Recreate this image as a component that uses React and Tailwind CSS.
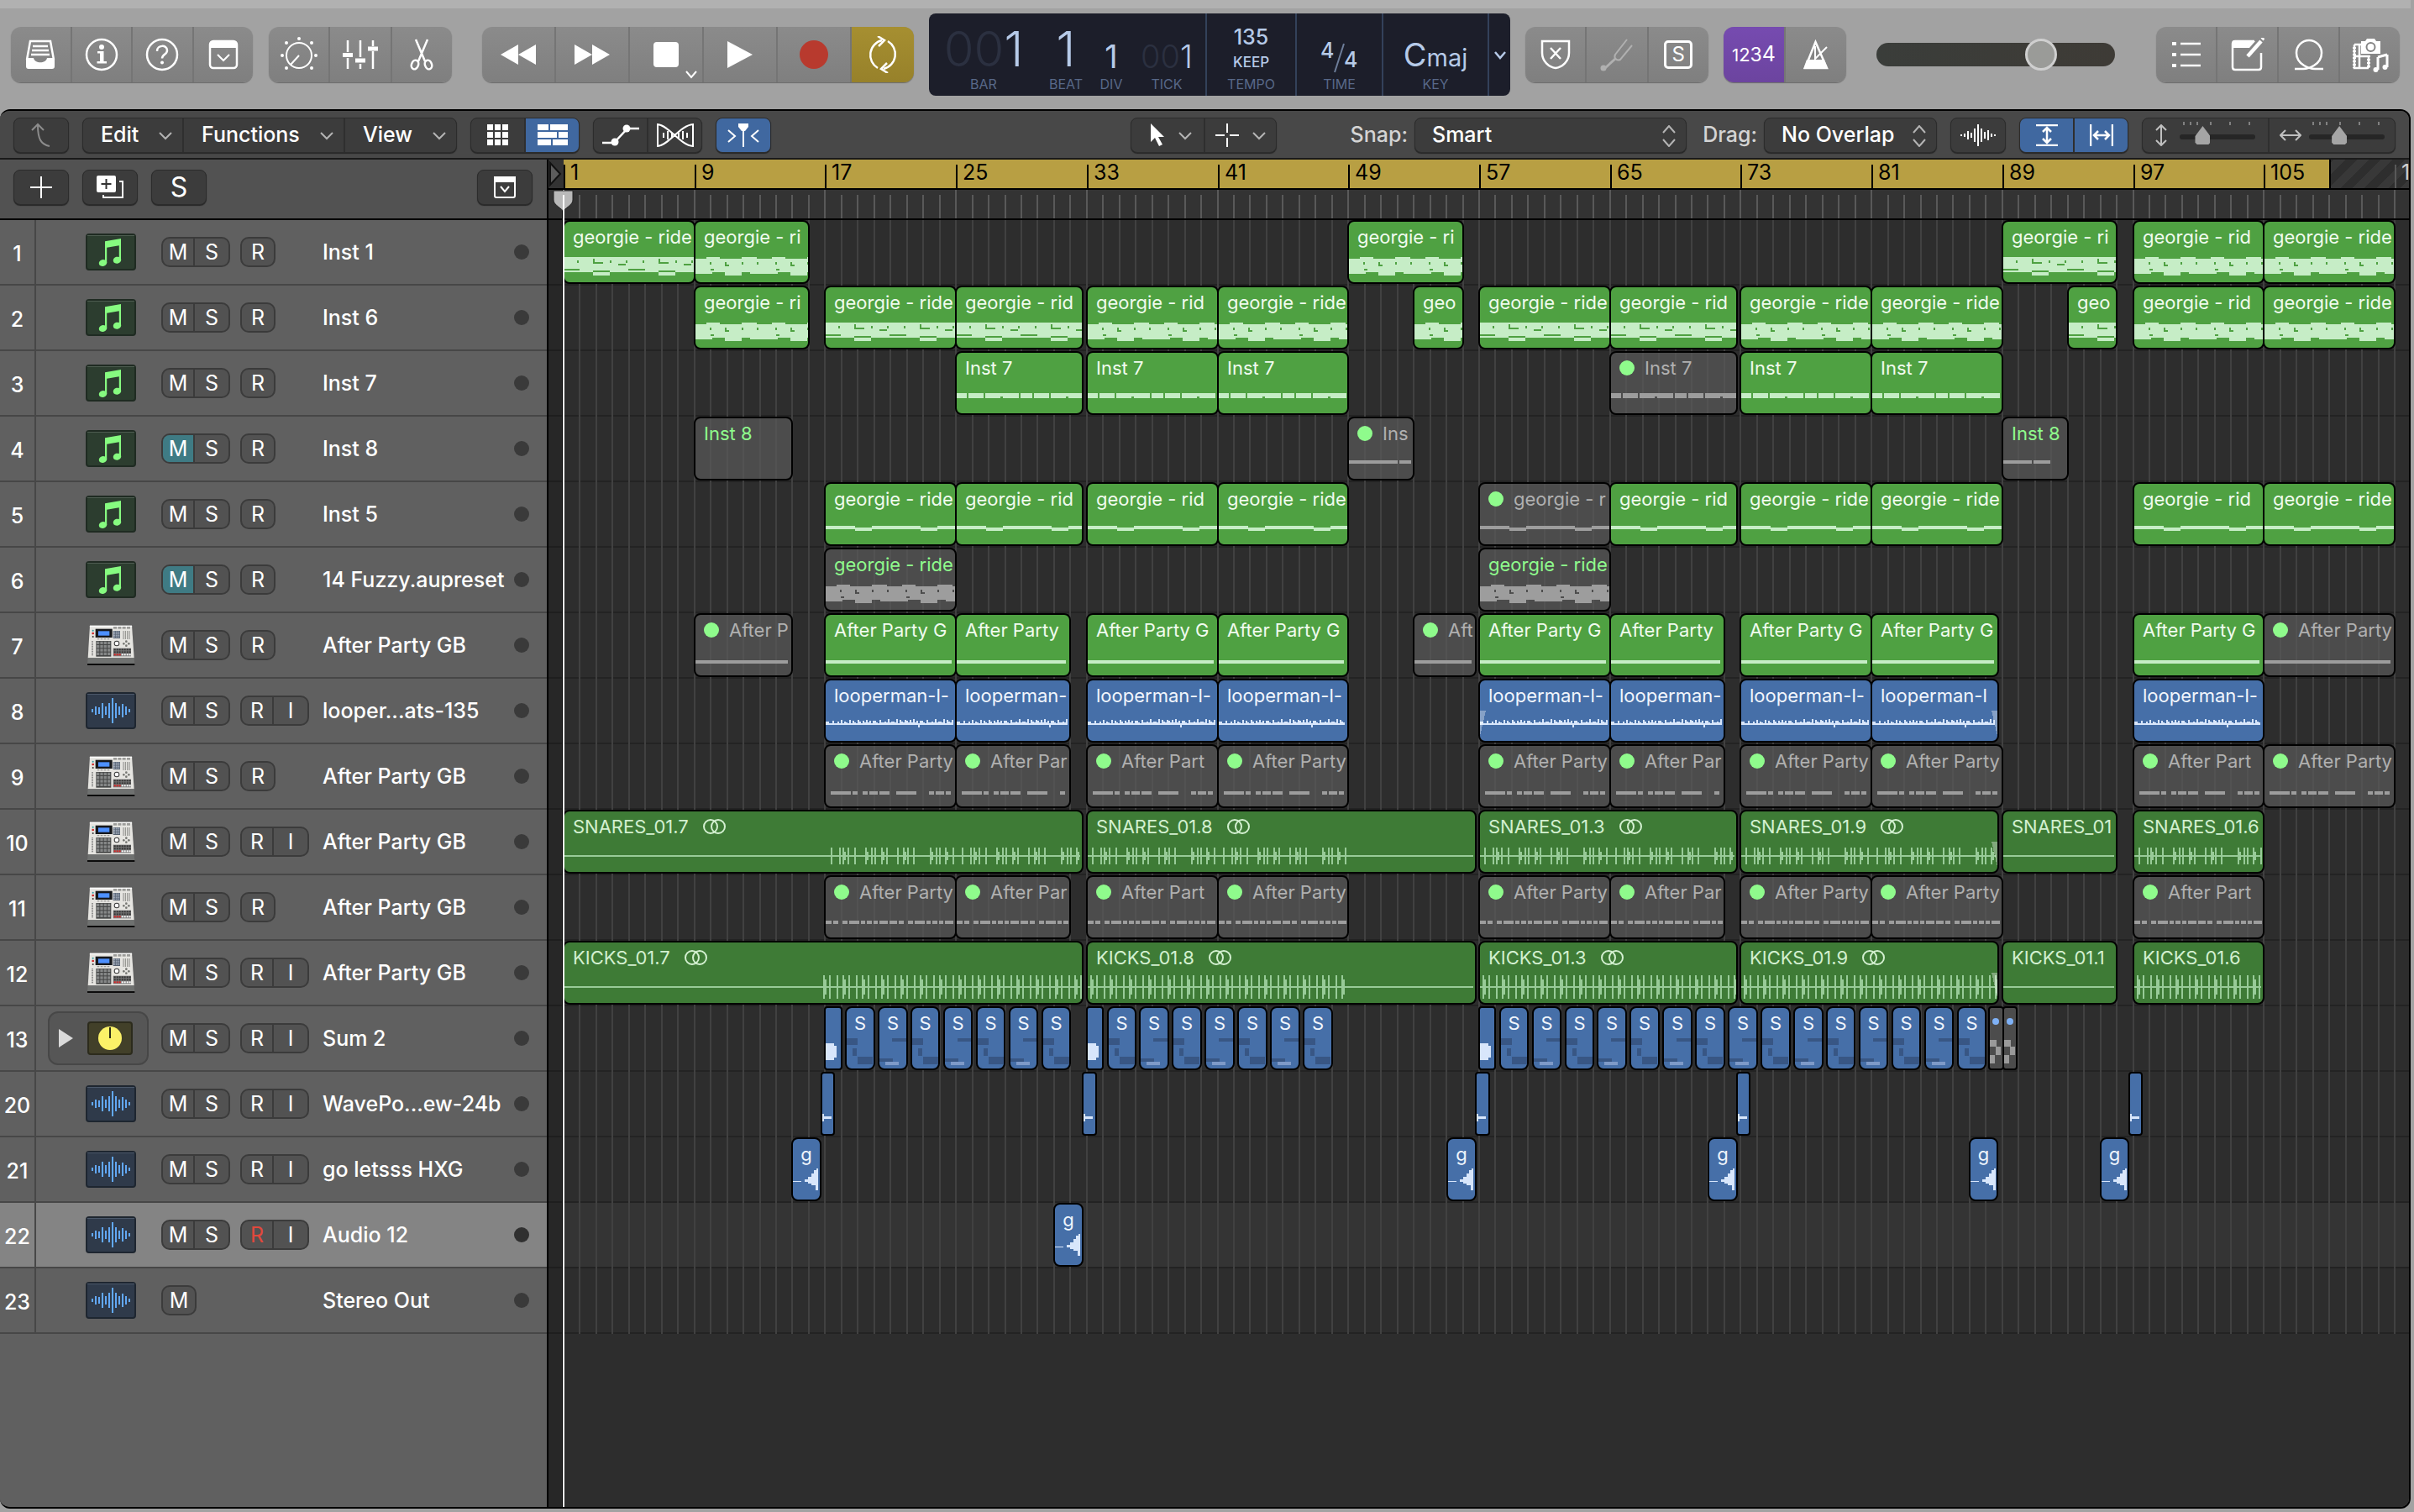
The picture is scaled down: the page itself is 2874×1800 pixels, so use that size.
import React from 'react';

// Horizontal zoom of the arrange area
const PX_PER_BAR = 19.464;
const barX = (bar) => Math.round((bar - 1) * PX_PER_BAR);

const RULER_BARS = [1, 9, 17, 25, 33, 41, 49, 57, 65, 73, 81, 89, 97, 105];
const GRID_BARS = Array.from({ length: 113 }, (_, i) => i + 1);

// Region: [start bar, end bar, label, options]
const MUTED = { muted: true };
const DOT = { dot: true };
const STEREO = { stereo: true };

const summingRegions = () => {
  const list = [];
  const groups = [
    [17, 7],
    [33, 7],
    [57, 15],
  ];
  groups.forEach(([start, count]) => {
    list.push([start, start + 1, '', { art: 'hit', thin: true }]);
    for (let i = 0; i < count; i++) {
      const from = start + 1.27 + i * 2;
      list.push([from, from + 1.72, 'S', { art: i % 2 ? 'sumB' : 'sumA' }]);
    }
  });
  list.push([88.2, 89.05, '', { art: 'stub', thin: true, gray: true }]);
  list.push([89.05, 89.9, '', { art: 'stub', thin: true, gray: true }]);
  return list;
};

const TRACKS = [
  {
    num: 1, icon: 'note', name: 'Inst 1', buttons: 'MSR', color: 'green',
    regions: [
      [1, 9, 'georgie - ride', { art: 'riffA' }],
      [9, 16, 'georgie - ri', { art: 'riffB' }],
      [49, 56, 'georgie - ri', { art: 'riffB' }],
      [89, 96, 'georgie - ri', { art: 'riffA' }],
      [97, 105, 'georgie - rid', { art: 'riffB' }],
      [105, 113, 'georgie - ride', { art: 'riffB' }],
    ],
  },
  {
    num: 2, icon: 'note', name: 'Inst 6', buttons: 'MSR', color: 'green',
    regions: [
      [9, 16, 'georgie - ri', { art: 'riffB' }],
      [17, 25, 'georgie - ride', { art: 'riffA' }],
      [25, 32.75, 'georgie - rid', { art: 'riffA' }],
      [33, 41, 'georgie - rid', { art: 'riffB' }],
      [41, 49, 'georgie - ride', { art: 'riffB' }],
      [53, 56, 'geo', { art: 'riffB' }],
      [57, 65, 'georgie - ride', { art: 'riffA' }],
      [65, 72.75, 'georgie - rid', { art: 'riffA' }],
      [73, 81, 'georgie - ride', { art: 'riffB' }],
      [81, 89, 'georgie - ride', { art: 'riffB' }],
      [93, 96, 'geo', { art: 'riffA' }],
      [97, 105, 'georgie - rid', { art: 'riffB' }],
      [105, 113, 'georgie - ride', { art: 'riffB' }],
    ],
  },
  {
    num: 3, icon: 'note', name: 'Inst 7', buttons: 'MSR', color: 'green', art: 'chops',
    regions: [
      [25, 32.75, 'Inst 7'],
      [33, 41, 'Inst 7'],
      [41, 49, 'Inst 7'],
      [65, 72.75, 'Inst 7', DOT],
      [73, 81, 'Inst 7'],
      [81, 89, 'Inst 7'],
    ],
  },
  {
    num: 4, icon: 'note', name: 'Inst 8', buttons: 'MSR', color: 'green', muted: true, art: 'short',
    regions: [
      [9, 15, 'Inst 8', { muted: true, art: 'none' }],
      [49, 53, 'Ins', { dot: true, art: 'long' }],
      [89, 93, 'Inst 8', MUTED],
    ],
  },
  {
    num: 5, icon: 'note', name: 'Inst 5', buttons: 'MSR', color: 'green', art: 'bass',
    regions: [
      [17, 25, 'georgie - ride'],
      [25, 32.75, 'georgie - rid'],
      [33, 41, 'georgie - rid'],
      [41, 49, 'georgie - ride'],
      [57, 65, 'georgie - r', DOT],
      [65, 72.75, 'georgie - rid'],
      [73, 81, 'georgie - ride'],
      [81, 89, 'georgie - ride'],
      [97, 105, 'georgie - rid'],
      [105, 113, 'georgie - ride'],
    ],
  },
  {
    num: 6, icon: 'note', name: '14 Fuzzy.aupreset', buttons: 'MSR', color: 'green', muted: true, art: 'riffB',
    regions: [
      [17, 25, 'georgie - ride', MUTED],
      [57, 65, 'georgie - ride', MUTED],
    ],
  },
  {
    num: 7, icon: 'mpc', name: 'After Party GB', buttons: 'MSR', color: 'green', art: 'line',
    regions: [
      [9, 15, 'After P', DOT],
      [17, 25, 'After Party G'],
      [25, 32, 'After Party'],
      [33, 41, 'After Party G'],
      [41, 49, 'After Party G'],
      [53, 56.8, 'Aft', DOT],
      [57, 65, 'After Party G'],
      [65, 72, 'After Party'],
      [73, 81, 'After Party G'],
      [81, 88.75, 'After Party G'],
      [97, 105, 'After Party G'],
      [105, 113, 'After Party', DOT],
    ],
  },
  {
    num: 8, icon: 'wave', name: 'looper...ats-135', buttons: 'MSRI', color: 'blue', art: 'hats',
    regions: [
      [17, 25, 'looperman-l-'],
      [25, 32, 'looperman-'],
      [33, 41, 'looperman-l-'],
      [41, 49, 'looperman-l-'],
      [57, 65, 'looperman-l-', { fadeIn: true }],
      [65, 72, 'looperman-'],
      [73, 81, 'looperman-l-'],
      [81, 88.75, 'looperman-l', { fadeOut: true }],
      [97, 105, 'looperman-l-'],
    ],
  },
  {
    num: 9, icon: 'mpc', name: 'After Party GB', buttons: 'MSR', color: 'green', art: 'dashes',
    regions: [
      [17, 25, 'After Party', DOT],
      [25, 32, 'After Par', DOT],
      [33, 41, 'After Part', DOT],
      [41, 49, 'After Party', DOT],
      [57, 65, 'After Party', DOT],
      [65, 72, 'After Par', DOT],
      [73, 81, 'After Party', DOT],
      [81, 89, 'After Party', DOT],
      [97, 105, 'After Part', DOT],
      [105, 113, 'After Party', DOT],
    ],
  },
  {
    num: 10, icon: 'mpc', name: 'After Party GB', buttons: 'MSRI', color: 'dark', art: 'snares',
    regions: [
      [1, 32.75, 'SNARES_01.7', { stereo: true, from: 17 }],
      [33, 56.8, 'SNARES_01.8', { stereo: true, to: 49 }],
      [57, 72.75, 'SNARES_01.3', STEREO],
      [73, 88.75, 'SNARES_01.9', { stereo: true, fadeOut: true }],
      [89, 96, 'SNARES_01', { to: 89 }],
      [97, 105, 'SNARES_01.6'],
    ],
  },
  {
    num: 11, icon: 'mpc', name: 'After Party GB', buttons: 'MSR', color: 'green', art: 'dots',
    regions: [
      [17, 25, 'After Party', DOT],
      [25, 32, 'After Par', DOT],
      [33, 41, 'After Part', DOT],
      [41, 49, 'After Party', DOT],
      [57, 65, 'After Party', DOT],
      [65, 72, 'After Par', DOT],
      [73, 81, 'After Party', DOT],
      [81, 89, 'After Party', DOT],
      [97, 105, 'After Part', DOT],
    ],
  },
  {
    num: 12, icon: 'mpc', name: 'After Party GB', buttons: 'MSRI', color: 'dark', art: 'kicks',
    regions: [
      [1, 32.75, 'KICKS_01.7', { stereo: true, from: 16.6 }],
      [33, 56.8, 'KICKS_01.8', { stereo: true, to: 48.8 }],
      [57, 72.75, 'KICKS_01.3', STEREO],
      [73, 88.75, 'KICKS_01.9', { stereo: true, fadeOut: true }],
      [89, 96, 'KICKS_01.1', { to: 89 }],
      [97, 105, 'KICKS_01.6'],
    ],
  },
  { num: 13, icon: 'stack', name: 'Sum 2', buttons: 'MSRI', color: 'blue', regions: summingRegions() },
  {
    num: 20, icon: 'wave', name: 'WavePo...ew-24b', buttons: 'MSRI', color: 'blue', art: 'blip',
    regions: [16.75, 32.75, 56.8, 72.75, 96.75].map((b) => [b, b + 0.8, '', { thin: true }]),
  },
  {
    num: 21, icon: 'wave', name: 'go letsss HXG', buttons: 'MSRI', color: 'blue', art: 'swell',
    regions: [15, 55.05, 71.05, 87, 95].map((b) => [b, b + 1.72, 'g']),
  },
  {
    num: 22, icon: 'wave', name: 'Audio 12', buttons: 'MSRI', color: 'blue', art: 'swell', selected: true, armed: true,
    regions: [[31, 32.75, 'g']],
  },
  { num: 23, icon: 'wave', name: 'Stereo Out', buttons: 'M', color: 'blue', regions: [] },
];

/* ---------- Region artwork ---------- */

const R = (x, y, w, h, cut) => ({ x, y, w, h, cut });

// Each pattern repeats every `size` pixels
const PATTERNS = {
  riffA: {
    size: 78,
    rects: [
      R(0, 44, 78, 18), R(36, 62, 20, 4), R(0, 58, 20, 2, true), R(36, 60, 20, 2, true),
      R(17, 48, 2, 3, true), R(36, 46, 2, 6, true), R(38, 50, 10, 2, true),
      R(56, 48, 2, 3, true), R(66, 52, 9, 2, true), R(75, 48, 2, 3, true),
    ],
  },
  riffB: {
    size: 78,
    rects: [
      R(0, 46, 78, 18), R(15, 44, 16, 2), R(57, 44, 18, 2), R(37, 64, 20, 2),
      R(22, 62, 15, 2, true), R(57, 62, 10, 2, true), R(19, 50, 2, 3, true),
      R(37, 50, 2, 5, true), R(39, 53, 3, 2, true), R(57, 50, 2, 3, true),
      R(20, 58, 4, 2, true), R(75, 50, 2, 3, true),
    ],
  },
  chops: {
    size: 78,
    rects: [
      R(0, 50, 14, 6), R(16, 50, 18, 6), R(36, 50, 18, 6), R(54, 50, 3, 4),
      R(57, 50, 19, 6),
    ],
  },
  bass: { size: 78, rects: [R(0, 52, 37, 4), R(37, 54, 20, 4), R(57, 52, 21, 4)] },
  dashes: {
    size: 156,
    rects: [
      R(8, 56, 24, 4), R(34, 56, 6, 4), R(46, 56, 6, 4), R(54, 56, 10, 4), R(66, 56, 12, 4),
      R(86, 56, 24, 4), R(125, 56, 6, 4), R(133, 56, 10, 4), R(145, 56, 6, 4),
    ],
  },
  dots: {
    size: 78,
    rects: [
      R(0, 54, 9, 4), R(11, 54, 6, 4), R(22, 54, 6, 4), R(30, 54, 12, 4), R(44, 54, 5, 4),
      R(51, 54, 6, 4), R(59, 54, 5, 4), R(66, 54, 10, 4),
    ],
  },
};

const SNARE_HITS = [7, 17, 21, 27, 35, 48, 55, 59, 67, 73, 86, 93, 98, 105, 125, 132, 136, 143, 152];
const HAT_PEAKS = [0, 2, 2, 0, 0, 3, 0, 0, 2, 0, 4, 0, 2, 1, 0, 4, 0, 3, 1, 0, 4, 2, 0, 3, 1, 4, 0, 2];

function Pattern({ name, width }) {
  const { size, rects } = PATTERNS[name];
  const id = React.useId();
  return (
    <>
      <mask id={id}>
        <rect x="0" y="0" width={width} height="76" fill="#fff" />
        {Array.from({ length: Math.ceil(width / size) }, (_, t) =>
          rects
            .filter((r) => r.cut)
            .map((r, i) => <rect key={`${t}-${i}`} x={r.x + t * size} y={r.y} width={r.w} height={r.h} fill="#000" />)
        )}
      </mask>
      <g mask={`url(#${id})`}>
        {Array.from({ length: Math.ceil(width / size) }, (_, t) =>
          rects
            .filter((r) => !r.cut)
            .map((r, i) => <rect key={`${t}-${i}`} x={r.x + t * size} y={r.y} width={r.w} height={r.h} />)
        )}
      </g>
    </>
  );
}

function Transients({ kind, width, from, to }) {
  const hits = [];
  if (kind === 'snares') {
    for (let base = from; base < to; base += 156) {
      SNARE_HITS.forEach((h, i) => {
        if (base + h < to - 2) {
          hits.push(<rect key={`${base}-${i}`} x={base + h} y="45" width="2" height="20" />);
          if (i % 3 === 2) hits.push(<rect key={`${base}-${i}s`} x={base + h + 2} y="50" width="2" height="10" />);
        }
      });
    }
  } else {
    let i = 0;
    for (let x = from + 5; x < to - 3; x += i % 3 === 1 ? 9 : 7, i++) {
      hits.push(<rect key={x} x={x} y="41" width="2" height="28" />);
      if (i % 3 === 0) hits.push(<rect key={`${x}s`} x={x + 2} y="46" width="2" height="18" />);
    }
  }
  return (
    <>
      <rect x="0" y="54" width={width - 4} height="2" />
      {hits}
    </>
  );
}

function RegionArt({ art, width, from, to }) {
  switch (art) {
    case 'riffA':
    case 'riffB':
    case 'chops':
    case 'bass':
    case 'dashes':
    case 'dots':
      return <Pattern name={art} width={width - (art === 'dashes' ? 6 : 0)} />;
    case 'short':
      return <path d="M0 52h36v4H0zM38 52h20v4H38z" />;
    case 'long':
      return <path d="M0 52h60v4H0zM62 52h14v4H62z" />;
    case 'line':
      return <rect x="0" y="56" width={width - 6} height="4" />;
    case 'hats':
      return Array.from({ length: Math.floor((width - 4) / 2) }, (_, i) => {
        const peak = HAT_PEAKS[i % HAT_PEAKS.length] + (i > 25 && i % 4 ? 1 : 0);
        const tail = i === 56 ? 3 : 0;
        return <rect key={i} x={i * 2} y={53 - peak} width="2" height={peak + 2 + tail} />;
      });
    case 'snares':
    case 'kicks':
      return <Transients kind={art} width={width} from={from} to={to} />;
    case 'hit':
      return <path d="M2 44h10v3h3v14h-3v3H2z" />;
    case 'sumA':
      return (
        <g fill="#385684">
          <rect x="2" y="38" width="13" height="8" />
          <rect x="9" y="50" width="5" height="9" />
          <rect x="15" y="60" width="18" height="9" />
        </g>
      );
    case 'sumB':
      return (
        <>
          <rect x="17" y="38" width="17" height="4" fill="#385684" />
          <rect x="2" y="62" width="16" height="4" fill="#385684" />
          <rect x="9" y="66" width="16" height="4" fill="#7e9ac8" />
        </>
      );
    case 'stub':
      return (
        <>
          <circle cx="9" cy="18" r="4" fill="#7fb2f7" shapeRendering="auto" />
          <path d="M2 40h8v8H2zM9 48h6v10H9zM2 58h6v10H2z" fill="#9a9a9a" />
        </>
      );
    case 'blip':
      return <path d="M2 50h2v3h9v3H4v3H2z" />;
    case 'swell':
      return <path d="M0 53h12v-1h4v-2h4v-3h4v-4h3v-4h3v-2h2v26h-3v-6h-5v-2h-4v-2h-4v-1H0z" />;
    default:
      return null;
  }
}

const REGION_BG = {
  green: 'bg-[#4fa142] text-[#f0fbee]',
  dark: 'bg-[#3e7b36] text-[#d3f0d0]',
  blue: 'bg-[#466fa8] text-[#f1f6fd]',
};
const ART_COLOR = { green: '#c6edc6', dark: '#98cb98', blue: '#d8e6fb' };

function Region({ track, region }) {
  const [start, end, label, opts = {}] = region;
  // Neighbouring regions share their black outline
  const left = barX(start) - 1;
  const width = barX(end) - left + 1;
  const inactive = opts.muted || opts.dot || opts.gray;
  const art = opts.art || track.art;
  const tone = inactive ? 'bg-[#5a5a5a]/70' : REGION_BG[track.color];
  const narrow = width < 50;

  return (
    <div
      className={`absolute inset-y-0 overflow-hidden border-2 border-black ${opts.thin ? 'rounded-sm' : 'rounded-lg'} ${tone}`}
      style={{ left, width }}
    >
      {art !== 'none' && (
        <svg
          className="absolute inset-0"
          width={width - 4}
          height="72"
          viewBox={`2 2 ${width - 4} 72`}
          fill={inactive ? '#9d9d9d' : ART_COLOR[track.color]}
          shapeRendering="crispEdges"
        >
          <RegionArt
            art={art}
            width={width}
            from={opts.from ? barX(opts.from) - left : 0}
            to={opts.to ? barX(opts.to) - left : width}
          />
          {opts.fadeOut && <path d={`M${width - 9} 38h7v30z`} fill="#fff" fillOpacity="0.35" />}
          {opts.fadeIn && <path d="M2 38h7L2 68z" fill="#fff" fillOpacity="0.35" />}
        </svg>
      )}
      {label && (
        <div
          className={`relative flex items-center whitespace-nowrap pt-[3px] text-[22px] leading-[30px] ${
            narrow ? 'justify-center' : 'pl-2.5'
          } ${opts.muted ? 'text-[#8ffb8c]' : ''} ${opts.dot ? 'text-[#b0b0b0]' : ''}`}
        >
          {opts.dot && <span className="mr-3 size-[18px] shrink-0 rounded-full bg-[#8ffb8c]" />}
          {label}
          {opts.stereo && (
            <svg className="ml-4" width="30" height="20" viewBox="0 0 30 20" fill="none" stroke="#d3f0d0" strokeWidth="2">
              <circle cx="10" cy="10" r="8" />
              <circle cx="19" cy="10" r="8" />
            </svg>
          )}
        </div>
      )}
    </div>
  );
}

/* ---------- Track headers ---------- */

function NoteIcon() {
  return (
    <svg width="60" height="44" viewBox="0 0 60 44">
      <rect x="1" y="1" width="58" height="42" rx="3" fill="#2c3d2f" stroke="#1f2b22" strokeWidth="2" />
      <path d="M2 2.5h56" stroke="#4d5c50" />
      <path d="M23 9.200L42 6v25.500h-2.200V14.200L25.200 16.800V35H23z" fill="#86fb80" />
      <ellipse cx="20.500" cy="35" rx="4.800" ry="4" fill="#86fb80" transform="rotate(-15 20.500 35)" />
      <ellipse cx="37.500" cy="31.700" rx="4.800" ry="4" fill="#86fb80" transform="rotate(-15 37.500 31.700)" />
    </svg>
  );
}

const WAVE_ICON = [2, 5, 4, 9, 5, 9, 15, 9, 5, 8, 5, 2];

function WaveIcon() {
  return (
    <svg width="60" height="44" viewBox="0 0 60 44">
      <rect x="1" y="1" width="58" height="42" rx="3" fill="#2f3a4a" stroke="#1e2630" strokeWidth="2" />
      <path d="M2 2.5h56" stroke="#4b586a" />
      {WAVE_ICON.map((h, i) => (
        <rect key={i} x={7 + i * 4} y={22 - h} width="2" height={h * 2} fill="#62a8f5" />
      ))}
    </svg>
  );
}

function MpcIcon() {
  const grid = (cols, rows) => Array.from({ length: cols * rows }, (_, i) => [i % cols, Math.floor(i / cols)]);
  return (
    <svg width="60" height="48" viewBox="-5 0 180 144">
      <path d="M10 2h150l8 116H3z" fill="#e6e5e1" />
      <path d="M3 118h165l2 22H1z" fill="#6f7170" />
      <path d="M1 138h169v6H1z" fill="#0c0c0c" />
      <path d="M10 2h150l1 5H9z" fill="#fafafa" />
      <rect x="30" y="14" width="60" height="31" fill="#16181c" />
      <rect x="40" y="22" width="40" height="16" fill="#4d90ff" />
      <g fill="#9b9b99">
        {[94, 110, 126, 142].map((x) => <rect key={x} x={x} y="6" width="12" height="8" />)}
        {[36, 48, 60, 72].map((x) => <rect key={x} x={x} y="48" width="8" height="4" />)}
      </g>
      <rect x="93" y="21" width="25" height="27" fill="#55606f" />
      {grid(3, 4).map(([c, r]) => <rect key={`a${c}${r}`} x={94 + c * 8} y={23 + r * 6} width="6" height="3" fill="#b9c4d6" />)}
      {grid(4, 5).map(([c, r]) => <circle key={`b${c}${r}`} cx={130 + c * 7} cy={24 + r * 6} r="2" fill="#62635f" />)}
      <rect x="32" y="57" width="54" height="56" fill="#444545" />
      {grid(4, 4).map(([c, r]) => <rect key={`c${c}${r}`} x={34 + c * 13} y={59 + r * 13} width="10" height="10" fill="#858787" />)}
      <circle cx="106" cy="66" r="10" fill="#383838" />
      <circle cx="106" cy="66" r="7" fill="#fff" />
      {[[140, 59], [140, 74], [131, 67], [149, 67]].map(([x, y]) => <circle key={`${x}${y}`} cx={x} cy={y} r="4" fill="#777874" />)}
      <rect x="93" y="83" width="64" height="29" fill="#777" />
      {grid(7, 3).map(([c, r]) => (
        <rect key={`d${c}${r}`} x={96 + c * 9} y={85 + r * 9} width="6" height="6" fill={r === 2 && c < 3 ? '#d22' : r === 2 ? '#fff' : '#333'} />
      ))}
      <circle cx="21" cy="20" r="3" fill="#2a9aa0" />
      <circle cx="21" cy="30" r="4" fill="#c22" />
      <circle cx="21" cy="42" r="3" fill="#333" />
      <path d="M19 58v54" stroke="#777" strokeWidth="6" strokeDasharray="3 3" />
    </svg>
  );
}

function StackIcon() {
  return (
    <div className="ml-[14px] flex h-16 w-[120px] items-center rounded-xl border-2 border-[#474747] bg-[#565656]">
      <button aria-label="Open stack" className="ml-[11px] mr-[17px]">
        <svg width="17" height="22" viewBox="0 0 17 22"><path d="M0 0l17 11L0 22z" fill="#dadada" /></svg>
      </button>
      <svg width="54" height="40" viewBox="0 0 54 40">
        <rect x="1" y="1" width="52" height="38" rx="3" fill="#424029" stroke="#2c2b1c" strokeWidth="2" />
        <circle cx="27" cy="20" r="14" fill="#fbf168" />
        <path d="M27 7v13" stroke="#2b2a18" strokeWidth="2" />
      </svg>
    </div>
  );
}

function TrackIcon({ icon }) {
  if (icon === 'stack') return <StackIcon />;
  return (
    <div className="ml-[59px]">
      {icon === 'note' && <NoteIcon />}
      {icon === 'wave' && <WaveIcon />}
      {icon === 'mpc' && <MpcIcon />}
    </div>
  );
}

function ButtonPair({ letters, track }) {
  return (
    <div className="flex h-9 divide-x-2 divide-[#3b3b3b] overflow-hidden rounded-[10px] border-2 border-[#3b3b3b] bg-[#525252]">
      {letters.split('').map((l, i) => (
        <button
          key={l}
          className={`flex items-center justify-center text-[25px] leading-8 ${i ? 'w-10' : 'w-[38px]'} ${
            l === 'M' && track.muted ? 'bg-[#3f7b84]' : ''
          } ${l === 'R' && track.armed ? 'text-[#e2483c]' : 'text-white'}`}
        >
          {l}
        </button>
      ))}
    </div>
  );
}

function TrackHeader({ track }) {
  return (
    <div className={`flex h-[78px] items-stretch border-b-2 border-[#474747] text-white ${track.selected ? 'bg-[#848484]' : 'bg-[#606060]'}`}>
      <div className="flex w-[43px] items-center justify-center border-r-2 border-[#474747] pt-1.5 text-[25px] font-medium">{track.num}</div>
      <div className="flex w-[149px] items-center"><TrackIcon icon={track.icon} /></div>
      <div className="flex w-[192px] items-center gap-3">
        <ButtonPair letters={track.buttons.slice(0, 2)} track={track} />
        {track.buttons.length > 2 && <ButtonPair letters={track.buttons.slice(2)} track={track} />}
      </div>
      <div className="flex flex-1 items-center whitespace-nowrap pt-0.5 text-[25px] font-medium">{track.name}</div>
      <span className={`mr-[21px] size-[18px] self-center rounded-full ${track.selected ? 'bg-[#303030]' : 'bg-[#3a3a3a]'}`} />
    </div>
  );
}

/* ---------- Control bar ---------- */

function Group({ className = '', children }) {
  return (
    <div className={`flex h-[66px] shrink-0 divide-x-2 divide-[#757575] overflow-hidden rounded-xl bg-linear-to-b from-[#8b8b8b] to-[#7f7f7f] text-white shadow-[0_1px_1px_#6a6a6a] ${className}`}>
      {children}
    </div>
  );
}

function Cell({ label, className = 'flex-1', children }) {
  return (
    <button aria-label={label} className={`relative flex items-center justify-center ${className}`}>
      {children}
    </button>
  );
}

function Icon({ w = 40, h = 40, children, ...rest }) {
  return (
    <svg width={w} height={h} viewBox={`0 0 ${w} ${h}`} fill="none" stroke="currentColor" strokeWidth="2.500" {...rest}>
      {children}
    </svg>
  );
}

function LcdCell({ label, children, className = '' }) {
  return (
    <div className={`flex flex-col items-center ${className}`}>
      <div className="flex h-[74px] items-end">{children}</div>
      <div className="text-[16px] leading-5 text-[#586888]">{label}</div>
    </div>
  );
}

function Lcd() {
  return (
    <div className="flex h-[98px] w-[692px] shrink-0 divide-x-2 divide-[#33415a] rounded-lg bg-[#1c1e2a] text-[#b6cae8]">
      <div className="grid w-[331px] grid-cols-[130px_66px_42px_90px]">
        <LcdCell label="BAR">
          <span className="text-[58px] font-light leading-[64px]"><span className="text-[#2b3040]">00</span>1</span>
        </LcdCell>
        <LcdCell label="BEAT"><span className="text-[58px] font-light leading-[64px]">1</span></LcdCell>
        <LcdCell label="DIV"><span className="text-[38px] leading-[46px]">1</span></LcdCell>
        <LcdCell label="TICK">
          <span className="text-[38px] font-light leading-[46px]"><span className="text-[#2b3040]">00</span>1</span>
        </LcdCell>
      </div>
      <LcdCell label="TEMPO" className="w-[107px]">
        <span className="flex flex-col items-center pb-0.5 font-medium">
          <span className="text-[25px] leading-8">135</span>
          <span className="text-[17px] leading-7">KEEP</span>
        </span>
      </LcdCell>
      <LcdCell label="TIME" className="w-[103px]">
        <Icon w={46} h={46} strokeWidth="2">
          <path d="M28 8L17 42" stroke="#6d7d99" />
          <text x="0" y="25" fontSize="25" fontWeight="500" fill="#b6cae8" stroke="none">4</text>
          <text x="28" y="36" fontSize="25" fontWeight="500" fill="#b6cae8" stroke="none">4</text>
        </Icon>
      </LcdCell>
      <LcdCell label="KEY" className="w-[126px]">
        <span className="text-[38px] leading-[42px]">C<span className="text-[29px]">maj</span></span>
      </LcdCell>
      <button aria-label="Display mode" className="flex flex-1 items-center justify-center">
        <Icon w={16} h={11}><path d="M2 2l6 7 6-7" /></Icon>
      </button>
    </div>
  );
}

function ControlBar() {
  return (
    <header className="flex h-[120px] shrink-0 items-start px-[13px] pt-1.5">
      <Group className="mt-4 w-[288px]">
        <Cell label="Library">
          <Icon w={36} h={36}>
            <path d="M2 24L6 2h24l4 22" />
            <path d="M9 8h18M8 13h20M7 18h22" />
            <path d="M1 22h9c1 7 15 7 16 0h9v10q0 3-3 3H4q-3 0-3-3z" fill="currentColor" stroke="none" />
          </Icon>
        </Cell>
        <Cell label="Inspector">
          <Icon>
            <circle cx="20" cy="20" r="18" />
            <circle cx="20" cy="11" r="3" fill="currentColor" stroke="none" />
            <path d="M15 16h7.500v12h3.500v2.500H14.500V28H18v-9.500h-3z" fill="currentColor" stroke="none" />
          </Icon>
        </Cell>
        <Cell label="Quick Help">
          <Icon>
            <circle cx="20" cy="20" r="18" />
            <path d="M14 16c0-8 12-8 12-1 0 5-6 4.500-6 9.500" />
            <circle cx="20" cy="29.500" r="2" fill="currentColor" stroke="none" />
          </Icon>
        </Cell>
        <Cell label="Toolbar">
          <Icon w={36} h={36}>
            <rect x="2" y="2" width="32" height="32" rx="4" />
            <path d="M2 3h32v7H2z" fill="currentColor" stroke="none" />
            <path d="M11 18l7 7 7-7" strokeWidth="2" />
          </Icon>
        </Cell>
      </Group>

      <Group className="ml-[19px] mt-4 w-[218px]">
        <Cell label="Smart Controls">
          <Icon w={44} h={44} strokeWidth="2">
            <circle cx="22" cy="23" r="15" />
            <path d="M12 34l10-11" />
            <g fill="currentColor" stroke="none">
              <circle cx="22" cy="3" r="2" /><circle cx="7" cy="8" r="2" /><circle cx="37" cy="8" r="2" />
              <circle cx="2" cy="23" r="2" /><circle cx="42" cy="23" r="2" /><circle cx="7" cy="38" r="2" /><circle cx="37" cy="38" r="2" />
            </g>
          </Icon>
        </Cell>
        <Cell label="Mixer">
          <Icon w={42} h={36}>
            <path d="M6 1v14M6 22v13M21 1v20M21 29v6M36 1v7M36 14v21" strokeWidth="2.500" />
            <path d="M0 18.500h12M15 25h12M30 11h12" strokeWidth="5" />
          </Icon>
        </Cell>
        <Cell label="Editors">
          <Icon w={30} h={38}>
            <path d="M8 1l11 26M22 1L11 27" />
            <ellipse cx="7" cy="31" rx="4" ry="5.500" transform="rotate(20 7 31)" />
            <ellipse cx="23" cy="31" rx="4" ry="5.500" transform="rotate(-20 23 31)" />
          </Icon>
        </Cell>
      </Group>

      <Group className="ml-9 mt-4 w-[514px]">
        <Cell label="Rewind"><Icon w={42} h={24} fill="currentColor" stroke="none"><path d="M21 0v24L0 12zM42 0v24L21 12z" /></Icon></Cell>
        <Cell label="Forward"><Icon w={42} h={24} fill="currentColor" stroke="none"><path d="M0 0v24l21-12zM21 0v24l21-12z" /></Icon></Cell>
        <Cell label="Stop">
          <span className="size-[30px] rounded-sm bg-white" />
          <Icon className="absolute bottom-1 right-1.5" w={14} h={10} strokeWidth="2"><path d="M1 1l6 7 6-7" /></Icon>
        </Cell>
        <Cell label="Play"><Icon w={32} h={32} fill="currentColor" stroke="none"><path d="M1 0v32l30-16z" /></Icon></Cell>
        <Cell label="Record"><span className="size-[34px] rounded-full bg-[#b83a2e]" /></Cell>
        <Cell label="Cycle" className="w-[74px] bg-linear-to-b from-[#a68f31] to-[#97812a]">
          <Icon w={42} h={44}>
            <path d="M15 38A18 18 0 0 1 20 5" />
            <path d="M27 6A18 18 0 0 1 22 39" />
            <path d="M15 0l8 5-7 7M27 44l-8-5 7-7" />
          </Icon>
        </Cell>
      </Group>

      <div className="ml-[18px]"><Lcd /></div>

      <Group className="ml-[18px] mt-4 w-[218px]">
        <Cell label="Replace">
          <Icon w={36} h={36}>
            <path d="M2 2h32v14c0 10-8 17-16 18C10 33 2 26 2 16z" />
            <path d="M12 10l12 13M24 10L12 23" />
          </Icon>
        </Cell>
        <Cell label="Tuner" className="flex-1 text-[#b0b0b0]">
          <Icon w={40} h={40} strokeWidth="2">
            <path d="M32 2L18 20c-2 4 2 8 6 6L38 9" />
            <path d="M18 25L6 36" strokeWidth="3" />
            <circle cx="4" cy="36" r="3.500" fill="currentColor" stroke="none" />
          </Icon>
        </Cell>
        <Cell label="Solo">
          <span className="flex size-[34px] items-center justify-center rounded-[5px] border-[3px] border-white text-[24px] leading-7">S</span>
        </Cell>
      </Group>

      <Group className="ml-[18px] mt-4 w-[146px]">
        <Cell label="Count In" className="flex-1 bg-linear-to-b from-[#764bb0] to-[#6c449f]">
          <span className="text-[20px]">1<span className="text-[22px]">2</span><span className="text-[23px]">3</span><span className="text-[25px]">4</span></span>
        </Cell>
        <Cell label="Metronome">
          <Icon w={32} h={36}>
            <path d="M15.500 3L3 34h26z" />
            <path d="M5 24h21l4 11H1z" fill="currentColor" stroke="none" />
            <path d="M15 8v15l14-14" strokeWidth="2" />
          </Icon>
        </Cell>
      </Group>

      <div className="ml-9 mt-[35px] flex">
        <input
          type="range"
          aria-label="Master volume"
          defaultValue="72"
          className="h-7 w-[284px] appearance-none rounded-full bg-linear-to-r from-[#3a3d3a] to-[#3e3b36] [&::-webkit-slider-thumb]:size-[38px] [&::-webkit-slider-thumb]:appearance-none [&::-webkit-slider-thumb]:rounded-full [&::-webkit-slider-thumb]:border-[3px] [&::-webkit-slider-thumb]:border-[#cfcfcf] [&::-webkit-slider-thumb]:bg-[#9a9b98]"
        />
      </div>

      <Group className="ml-auto mt-4 w-[290px]">
        <Cell label="List Editors">
          <Icon w={34} h={34}>
            <path d="M10 4h24M10 17h24M10 30h24" />
            <path d="M0 4h5M0 17h5M0 30h5" strokeWidth="4" />
          </Icon>
        </Cell>
        <Cell label="Note Pads">
          <Icon w={40} h={40}>
            <path d="M28 4H5q-3 0-3 3v28q0 3 3 3h28q3 0 3-3V18" />
            <path d="M2 4h27l-7 8H2z" fill="currentColor" stroke="none" />
            <path d="M20 22L36 4" strokeWidth="4.500" />
            <path d="M37 2l2-2" strokeWidth="4" />
          </Icon>
        </Cell>
        <Cell label="Loops">
          <Icon w={36} h={38}>
            <path d="M1 36h10c6 0 22-5 22-19A15 15 0 0 0 3 17c0 14 16 19 22 19h10" />
          </Icon>
        </Cell>
        <Cell label="Browsers">
          <Icon w={44} h={42}>
            <path d="M3 9v28h17M9 9v28M3 9h8M3 23h17v14" />
            <path d="M3 12v25M20 22v15" strokeDasharray="2 2" strokeWidth="4" />
            <path d="M11 5h5l2-3h9l2 3h5v15H11z" fill="currentColor" stroke="none" />
            <circle cx="22.500" cy="12" r="5" stroke="#848484" strokeWidth="2" />
            <path d="M31 24l11-3M31 24v15M42 21v15" strokeWidth="3" />
            <circle cx="28.500" cy="39" r="3" fill="currentColor" stroke="none" />
            <circle cx="39.500" cy="36" r="3" fill="currentColor" stroke="none" />
          </Icon>
        </Cell>
      </Group>
    </header>
  );
}

/* ---------- Arrange toolbar ---------- */

function ToolGroup({ className = '', children }) {
  return (
    <div className={`flex h-[42px] shrink-0 divide-x-2 divide-[#2f2f2f] overflow-hidden rounded-lg border border-[#2c2c2c] bg-[#3c3c3c] text-white shadow-[0_1px_1px_#262626] ${className}`}>
      {children}
    </div>
  );
}

function Chevron() {
  return (
    <Icon w={16} h={11} strokeWidth="2" stroke="#b4b4b4"><path d="M1 2l7 7 7-7" /></Icon>
  );
}

function Picker({ id, label, labelWidth, width, value, options }) {
  return (
    <div className="flex shrink-0 items-center gap-2">
      <label htmlFor={id} className={`text-right text-[25px] font-medium text-[#d4d4d4] ${labelWidth}`}>{label}</label>
      <div className={`relative h-[42px] rounded-lg border border-[#2c2c2c] bg-[#3c3c3c] shadow-[0_1px_1px_#262626] ${width}`}>
        <select id={id} defaultValue={value} className="h-full w-full appearance-none pl-5 text-[25px] font-medium text-white">
          {options.map((o) => <option key={o}>{o}</option>)}
        </select>
        <Icon className="pointer-events-none absolute right-3 top-2" w={16} h={26} strokeWidth="2" stroke="#b4b4b4">
          <path d="M1 9l7-8 7 8M1 17l7 8 7-8" />
        </Icon>
      </div>
    </div>
  );
}

function ZoomSlider({ label, value, children }) {
  return (
    <div className="flex flex-1 items-center justify-around px-2">
      {children}
      <div className="flex w-[90px] flex-col">
        <div className="flex h-1 w-[88px] gap-1.5 px-1">
          <span className="w-0.5 bg-[#808080]" /><span className="w-0.5 bg-[#808080]" /><span className="w-0.5 bg-[#808080]" />
          <span className="flex flex-1 justify-between pl-2">
            <span className="w-0.5 bg-[#808080]" /><span className="w-0.5 bg-[#808080]" /><span className="w-0.5 bg-[#808080]" />
          </span>
        </div>
        <input
          type="range"
          aria-label={label}
          defaultValue={value}
          className="h-7 w-[90px] appearance-none bg-transparent [&::-webkit-slider-runnable-track]:h-1.5 [&::-webkit-slider-runnable-track]:rounded-full [&::-webkit-slider-runnable-track]:bg-[#262626] [&::-webkit-slider-thumb]:-mt-2.5 [&::-webkit-slider-thumb]:h-[22px] [&::-webkit-slider-thumb]:w-[18px] [&::-webkit-slider-thumb]:appearance-none [&::-webkit-slider-thumb]:bg-[#a5a5a5] [&::-webkit-slider-thumb]:[clip-path:polygon(50%_0,100%_55%,100%_90%,88%_100%,12%_100%,0_90%,0_55%)]"
        />
      </div>
    </div>
  );
}

function MenuButton({ children, className }) {
  return (
    <button className={`flex items-center justify-between pl-[21px] pr-3 text-[25px] font-medium ${className}`}>
      {children}
      <Chevron />
    </button>
  );
}

function ArrangeToolbar() {
  return (
    <div className="flex h-[58px] shrink-0 items-center gap-4 border-b-2 border-[#1a1a1a] bg-[#484848] px-4 pt-0.5">
      <ToolGroup className="w-[66px]">
        <Cell label="Up"><Icon w={28} h={30} strokeWidth="2" stroke="#8c8c8c"><path d="M24 28C14 26 10 20 10 3M3 9l7-7 7 7" /></Icon></Cell>
      </ToolGroup>
      <ToolGroup className="w-[446px]">
        <MenuButton className="w-[120px]">Edit</MenuButton>
        <MenuButton className="w-[192px]">Functions</MenuButton>
        <MenuButton className="flex-1">View</MenuButton>
      </ToolGroup>
      <ToolGroup className="w-[130px]">
        <Cell label="Grid">
          <Icon w={26} h={26} fill="currentColor" stroke="none">
            {[0, 9, 18].map((y) => [0, 9, 18].map((x) => <rect key={`${x}${y}`} x={x} y={y} width="7" height="7" />))}
          </Icon>
        </Cell>
        <Cell label="Tracks" className="flex-1 bg-[#4068a0]">
          <Icon w={36} h={26} fill="currentColor" stroke="none">
            <path d="M0 0h13v7H0zM15 0h21v7H15zM0 9h23v7H0zM25 9h11v7H25zM0 18h16v7H0zM18 18h18v7H18z" />
          </Icon>
        </Cell>
      </ToolGroup>
      <ToolGroup className="w-[130px]">
        <Cell label="Automation">
          <Icon w={44} h={26}>
            <path d="M0 22h14L30 5h14" /><circle cx="15" cy="21" r="4.500" fill="currentColor" stroke="none" />
            <circle cx="29" cy="5" r="4.500" fill="currentColor" stroke="none" />
          </Icon>
        </Cell>
        <Cell label="Flex">
          <Icon w={44} h={28} strokeWidth="2">
            <path d="M1 1v26C14 26 28 2 43 1v26C28 26 14 2 1 1z" />
            <path d="M8 11v6M13 9v10M18 11v6M22 12v4M26 11v6M31 9v10M36 11v6" />
          </Icon>
        </Cell>
      </ToolGroup>
      <ToolGroup className="w-[66px]">
        <Cell label="Catch" className="flex-1 bg-[#4068a0]">
          <Icon w={40} h={28} strokeWidth="2">
            <path d="M2 8l8 7-8 7M38 8l-8 7 8 7M20 8v20" />
            <path d="M14 0h12v4l-4 5h-4l-4-5z" fill="currentColor" stroke="none" />
          </Icon>
        </Cell>
      </ToolGroup>

      <ToolGroup className="ml-auto mr-[70px] w-[174px]">
        <button aria-label="Pointer tool" className="flex flex-1 items-center justify-end gap-4 pr-3.5">
          <Icon w={18} h={28} fill="currentColor" stroke="none"><path d="M1 0v22l5-5 5 10 4-2-5-9h7z" /></Icon>
          <Chevron />
        </button>
        <button aria-label="Marquee tool" className="flex flex-1 items-center justify-end gap-4 pr-3">
          <Icon w={28} h={28} strokeWidth="2"><path d="M14 0v11M14 17v11M0 14h11M17 14h11" /></Icon>
          <Chevron />
        </button>
      </ToolGroup>
      <Picker id="snap" label="Snap:" labelWidth="w-[70px]" width="w-[324px]" value="Smart" options={['Smart', 'Bar', 'Beat']} />
      <Picker id="drag" label="Drag:" labelWidth="w-[68px]" width="w-[206px]" value="No Overlap" options={['No Overlap', 'Overlap', 'Shuffle']} />
      <ToolGroup className="w-[66px]">
        <Cell label="Waveform zoom">
          <Icon w={42} h={26} strokeWidth="2">
            <path d="M1 12v2M5 11v4M9 8v10M13 10v6M17 5v16M21 0v26M25 5v16M29 9v8M33 7v12M37 11v4M41 12v2" />
          </Icon>
        </Cell>
      </ToolGroup>
      <ToolGroup className="w-[130px]">
        <Cell label="Fit vertical" className="flex-1 bg-[#4068a0]">
          <Icon w={26} h={26}><path d="M0 1h26M0 25h26M13 5v16M8 9l5-5 5 5M8 17l5 5 5-5" /></Icon>
        </Cell>
        <Cell label="Fit horizontal" className="flex-1 bg-[#4068a0]">
          <Icon w={28} h={26}><path d="M1 0v26M27 0v26M5 13h18M10 8l-5 5 5 5M18 8l5 5-5 5" /></Icon>
        </Cell>
      </ToolGroup>
      <ToolGroup className="w-[302px]">
        <ZoomSlider label="Vertical zoom" value="26">
          <Icon w={14} h={26} strokeWidth="2" stroke="#c0c0c0"><path d="M7 1v24M1 7l6-6 6 6M1 19l6 6 6-6" /></Icon>
        </ZoomSlider>
        <ZoomSlider label="Horizontal zoom" value="38">
          <Icon w={26} h={14} strokeWidth="2" stroke="#c0c0c0"><path d="M1 7h24M7 1L1 7l6 6M19 1l6 6-6 6" /></Icon>
        </ZoomSlider>
      </ToolGroup>
    </div>
  );
}

/* ---------- Arrange area ---------- */

function TrackList() {
  return (
    <aside className="w-[653px] shrink-0 border-r-2 border-black bg-[#606060]">
      <div className="flex h-[72px] items-center gap-4 border-b-2 border-black bg-[#525252] pb-1 pl-4 pr-[17px]">
        <ToolGroup className="w-[66px]">
          <Cell label="Add track"><Icon w={26} h={26} strokeWidth="2"><path d="M13 0v26M0 13h26" /></Icon></Cell>
        </ToolGroup>
        <ToolGroup className="w-[66px]">
          <Cell label="Duplicate track">
            <Icon w={34} h={28} strokeWidth="2">
              <rect x="1" y="0" width="23" height="20" rx="2" fill="currentColor" stroke="none" />
              <path d="M12.500 4v12M6.500 10h12" stroke="#333" />
              <path d="M28 7h4v19H9v-3" />
            </Icon>
          </Cell>
        </ToolGroup>
        <ToolGroup className="w-[66px]">
          <button className="flex-1 text-[32px] leading-10">S</button>
        </ToolGroup>
        <ToolGroup className="ml-auto w-[66px]">
          <Cell label="Track header options">
            <Icon w={26} h={26} strokeWidth="2">
              <rect x="1" y="1" width="24" height="24" rx="2" /><path d="M1 1h24v5H1z" fill="currentColor" /><path d="M8 12l5 6 5-6" />
            </Icon>
          </Cell>
        </ToolGroup>
      </div>
      {TRACKS.map((t) => <TrackHeader key={t.num} track={t} />)}
    </aside>
  );
}

function Ruler() {
  return (
    <div className="relative h-[72px] border-b-2 border-black bg-[#333]">
      <div className="h-9 border-b-2 border-black bg-[repeating-linear-gradient(135deg,#2e2e2e_0_10px,#383838_10px_20px)]">
        <div className="h-full border-r-2 border-black bg-[#b89f43]" style={{ width: barX(109.1) }} />
      </div>
      {GRID_BARS.map((b) => (
        <span
          key={b}
          className={`absolute bottom-0 w-0.5 bg-[#595959] ${b % 8 === 1 ? 'h-[34px]' : 'h-7'}`}
          style={{ left: barX(b) - 1 }}
        />
      ))}
      {RULER_BARS.map((b) => (
        <span key={b} className="absolute top-1.5 h-7 border-l-2 border-black pl-1.5 text-[25px] leading-[18px] text-black" style={{ left: barX(b) }}>
          {b}
        </span>
      ))}
      <span className="absolute top-1.5 h-7 border-l-2 border-[#595959] pl-1.5 text-[25px] leading-[18px] text-[#d0d0d0]" style={{ left: barX(113) }}>
        113
      </span>
    </div>
  );
}

function Timeline() {
  return (
    <section className="relative min-w-0 flex-1 overflow-hidden bg-[#2d2d2d]">
      <Ruler />
      <div className="relative">
        {TRACKS.map((t) => (
          <div key={t.num} className={`h-[78px] border-b-2 border-[#232323] ${t.selected ? 'bg-[#343434]' : ''}`} />
        ))}
        {GRID_BARS.map((b) => (
          <span key={b} className="absolute inset-y-0 w-0.5 bg-[#414141]" style={{ left: barX(b) - 1 }} />
        ))}
        <div className="absolute inset-0">
          {TRACKS.map((t) => (
            <div key={t.num} className="relative h-[78px] border-b-2 border-transparent">
              {t.regions.map((r, i) => <Region key={i} track={t} region={r} />)}
            </div>
          ))}
        </div>
      </div>
    </section>
  );
}

function Gutter() {
  return (
    <div className="relative z-10 w-[18px] shrink-0 bg-[#272727]">
      <div className="h-[72px] border-b-2 border-black bg-[#333]">
        <svg width="18" height="36" viewBox="0 0 18 36">
          <path d="M2 4l12 13L2 30z" fill="#5c5c5c" stroke="#111" strokeWidth="2" />
          <path d="M0 35h18" stroke="#000" strokeWidth="2" />
        </svg>
      </div>
      {TRACKS.map((t) => <div key={t.num} className="h-[78px] border-b-2 border-[#1e1e1e]" />)}
      {/* Playhead */}
      <div className="absolute -right-px bottom-0 top-9 w-[3px] border-l border-black bg-white" />
      <svg className="absolute -right-[13px] top-9" width="26" height="26" viewBox="0 0 26 26">
        <path d="M1 1h23v11c0 5-6 8-11.500 13C7 20 1 17 1 12z" fill="#b9b9b9" stroke="#222" />
        <path d="M13 6v20" stroke="#fff" strokeWidth="2" />
      </svg>
    </div>
  );
}

export default function App() {
  return (
    <div className="flex min-h-screen flex-col bg-[#a2a2a2] pb-1 pr-1 font-['Inter','Noto_Sans',sans-serif]">
      <div className="h-2.5 bg-[#b1b1b1]" />
      <ControlBar />
      <div className="flex flex-1 flex-col overflow-hidden rounded-xl border-y-2 border-r-2 border-black bg-[#606060]">
        <ArrangeToolbar />
        <main className="flex flex-1">
          <TrackList />
          <Gutter />
          <Timeline />
        </main>
      </div>
    </div>
  );
}
